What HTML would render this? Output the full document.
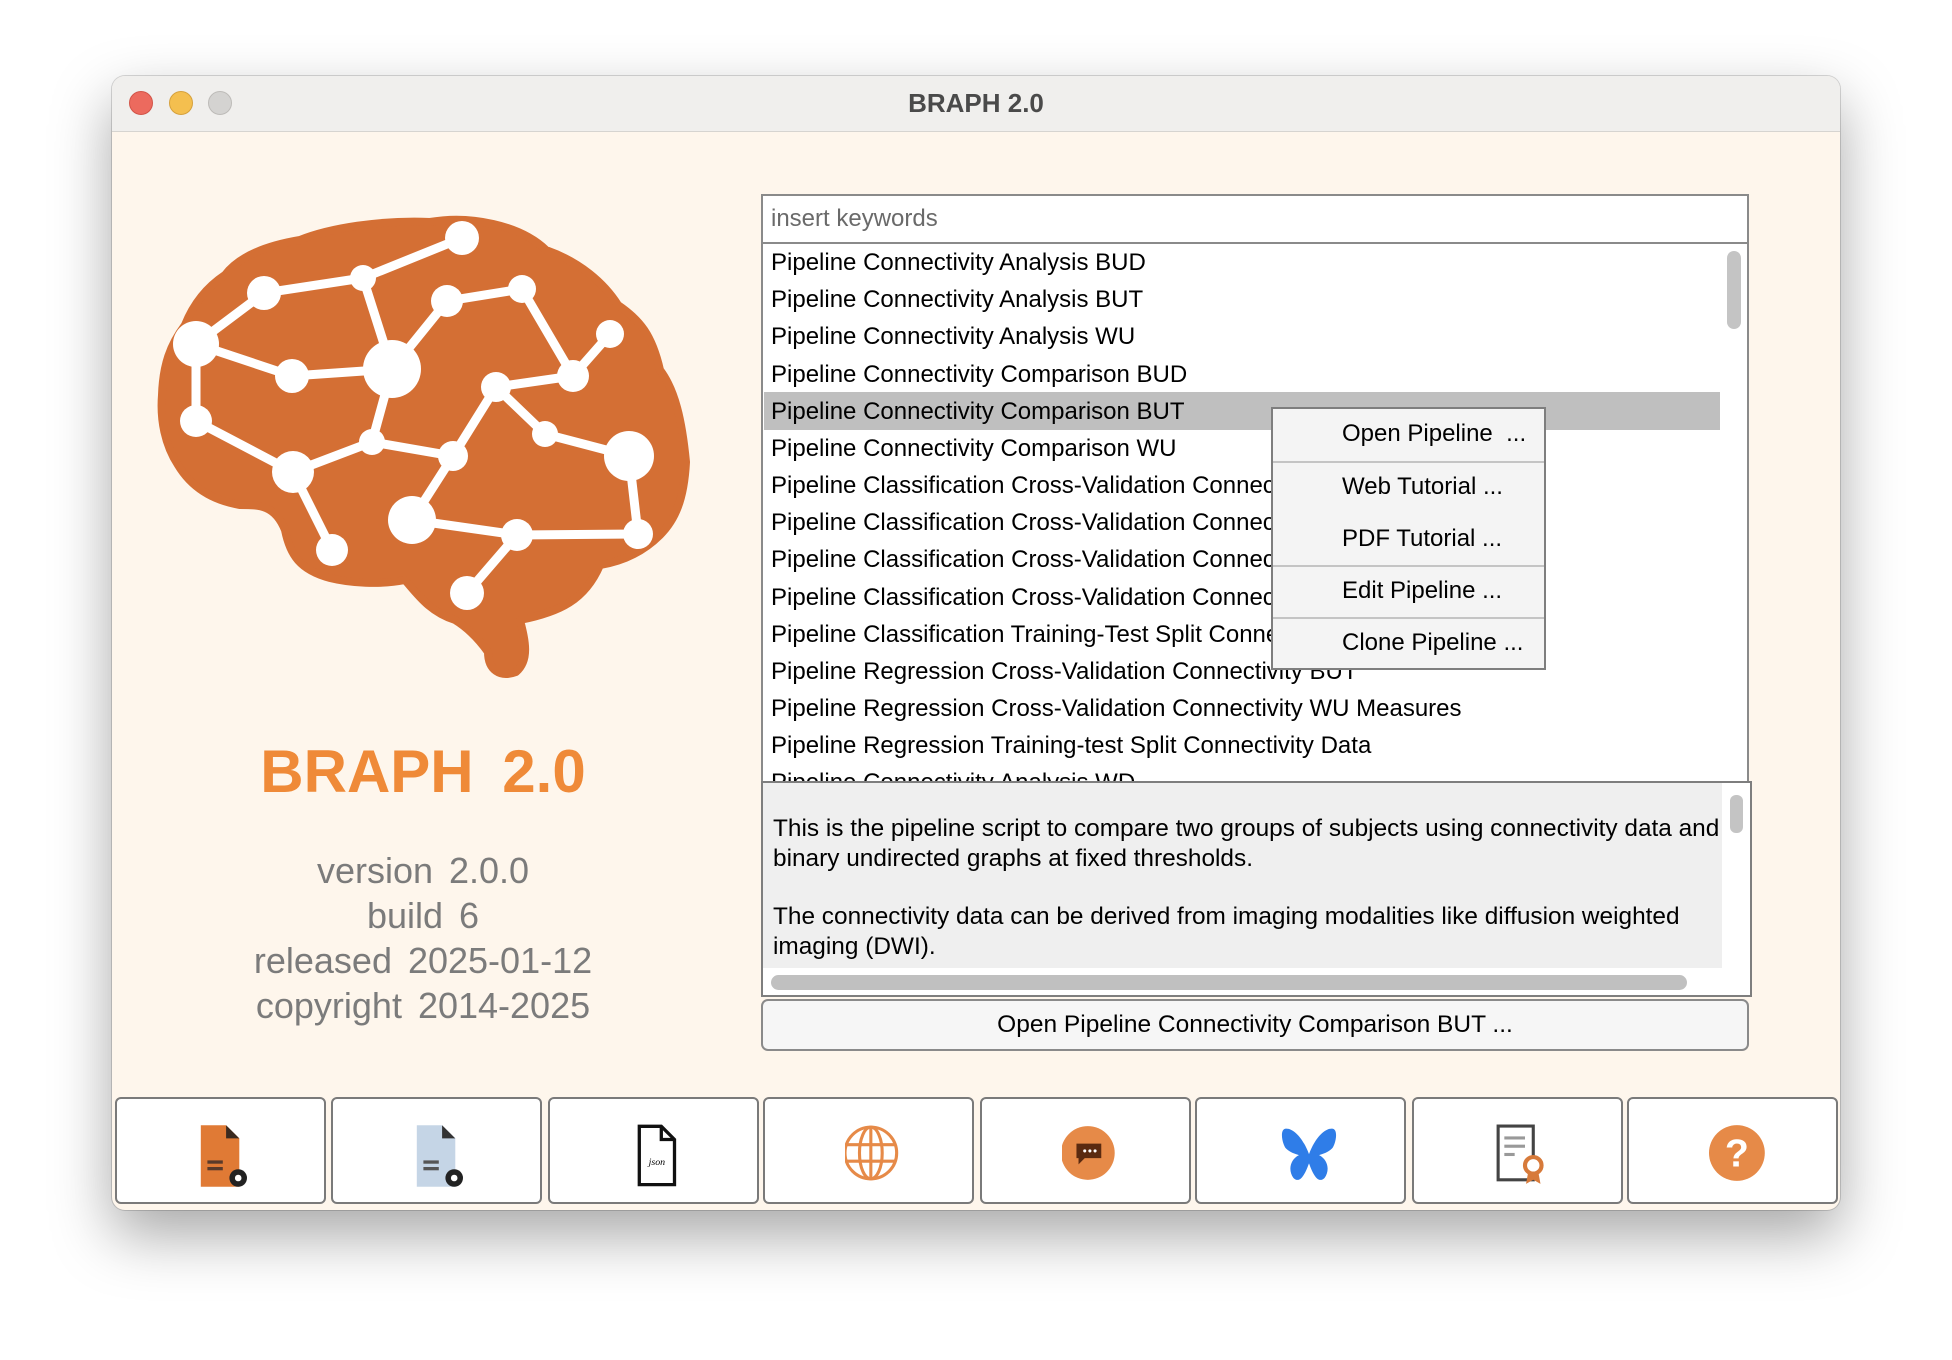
<!DOCTYPE html>
<html><head><meta charset="utf-8"><style>
*{margin:0;padding:0;box-sizing:border-box}
body{width:1952px;height:1360px;background:#fff;font-family:"Liberation Sans",Arial,sans-serif;position:relative;overflow:hidden}
.win{position:absolute;left:112px;top:76px;width:1728px;height:1134px;border-radius:13px;background:#fef6ec;box-shadow:0 25px 60px rgba(0,0,0,.35),0 0 0 1px rgba(0,0,0,.15);overflow:hidden}
.tb{position:absolute;left:0;top:0;width:100%;height:56px;background:#f0efed;border-bottom:1px solid #d6d4d0}
.tl{position:absolute;top:15px;width:24px;height:24px;border-radius:50%}
.title{position:absolute;left:0;right:0;top:12px;text-align:center;font-weight:bold;font-size:26px;color:#4a4a4a}
.abs{position:absolute}
.row{position:absolute;left:771px;font-size:24px;color:#000;white-space:nowrap;line-height:37px}
.mi{position:absolute;left:1342px;font-size:24px;color:#000;white-space:nowrap}
.bb{position:absolute;top:1097px;width:211px;height:107px;background:#fff;border:2px solid #7a7a7a;border-radius:6px}
.bb svg{position:absolute;left:80px;top:24px}
</style></head><body>
<div class="win">
 <div class="tb">
  <div class="tl" style="left:17px;background:#ec6a5e;border:1px solid #d25448"></div>
  <div class="tl" style="left:57px;background:#f4bf4f;border:1px solid #d6a13c"></div>
  <div class="tl" style="left:96px;background:#d4d3d1;border:1px solid #bdbbb8"></div>
  <div class="title">BRAPH 2.0</div>
 </div>
</div>

<svg class="abs" style="left:0;top:0" width="760" height="720" viewBox="0 0 760 720">
 <path d="M430 222 C470 215 520 225 546 250 C580 262 604 283 618 305 C640 320 652 335 660 370 C675 390 682 420 686 462 C684 500 675 520 660 535 C640 555 618 562 600 565 C585 600 560 612 520 620 C525 640 530 660 516 672 C500 678 488 670 488 652 C478 638 468 628 455 620 C430 612 418 595 405 580 C380 585 350 583 330 578 C300 570 290 555 285 530 C275 505 260 505 240 505 C210 500 190 485 178 465 C165 445 160 420 162 395 C163 365 170 345 185 325 C195 300 210 285 225 275 C240 255 270 245 300 240 C330 228 380 220 430 222 Z" fill="#d46f34" stroke="#d46f34" stroke-width="8" stroke-linejoin="round"/>
 <g stroke="#fff" stroke-width="9" stroke-linecap="round" fill="none">
  <path d="M462 238 L363 278 L264 293 L196 344 L196 421 L293 472 L332 550"/>
  <path d="M196 344 L292 376 L392 369 L447 301 L522 289 L573 376 L610 334"/>
  <path d="M363 278 L392 369 L372 442 L293 472"/>
  <path d="M372 442 L453 456 L496 387 L573 376"/>
  <path d="M496 387 L545 434 L629 456 L638 534 L517 535 L412 520 L453 456"/>
  <path d="M517 535 L467 593"/>
 </g>
 <g fill="#fff">
  <circle cx="462" cy="238" r="17"/><circle cx="363" cy="278" r="13"/><circle cx="264" cy="293" r="17"/>
  <circle cx="196" cy="344" r="23"/><circle cx="292" cy="376" r="17"/><circle cx="392" cy="369" r="29"/>
  <circle cx="447" cy="301" r="16"/><circle cx="522" cy="289" r="14"/><circle cx="610" cy="334" r="14"/>
  <circle cx="573" cy="376" r="16"/><circle cx="496" cy="387" r="15"/><circle cx="545" cy="434" r="13"/>
  <circle cx="629" cy="456" r="25"/><circle cx="638" cy="534" r="15"/><circle cx="517" cy="535" r="16"/>
  <circle cx="412" cy="520" r="24"/><circle cx="467" cy="593" r="17"/><circle cx="453" cy="456" r="15"/>
  <circle cx="372" cy="442" r="13"/><circle cx="293" cy="472" r="21"/><circle cx="196" cy="421" r="16"/>
  <circle cx="332" cy="550" r="16"/>
 </g>
</svg>

<div class="abs" style="left:223px;width:400px;top:737px;text-align:center;font-weight:bold;font-size:60px;color:#ef8a38;word-spacing:12px">BRAPH 2.0</div>
<div class="abs" style="left:223px;width:400px;top:848px;text-align:center;font-size:36px;color:#7b7b7b;line-height:45px;word-spacing:6px">version 2.0.0<br>build 6<br>released 2025-01-12<br>copyright 2014-2025</div>

<div class="abs" style="left:761px;top:194px;width:988px;height:50px;background:#fff;border:2px solid #8a8a8a"></div>
<div class="abs" style="left:771px;top:205px;font-size:24px;color:#6a6a6a">insert keywords</div>

<div class="abs" style="left:761px;top:242px;width:988px;height:541px;background:#fff;border:2px solid #8a8a8a;overflow:hidden">
 <div class="abs" style="left:1px;top:148px;width:956px;height:38px;background:#bfbfbf"></div>
 <div class="abs" style="left:964px;top:7px;width:14px;height:78px;border-radius:7px;background:#c4c4c4"></div>
</div>
<div class="row" style="top:244px">Pipeline Connectivity Analysis BUD</div>
<div class="row" style="top:281px">Pipeline Connectivity Analysis BUT</div>
<div class="row" style="top:318px">Pipeline Connectivity Analysis WU</div>
<div class="row" style="top:356px">Pipeline Connectivity Comparison BUD</div>
<div class="row" style="top:393px">Pipeline Connectivity Comparison BUT</div>
<div class="row" style="top:430px">Pipeline Connectivity Comparison WU</div>
<div class="row" style="top:467px">Pipeline Classification Cross-Validation Connectivity</div>
<div class="row" style="top:504px">Pipeline Classification Cross-Validation Connectivity</div>
<div class="row" style="top:541px">Pipeline Classification Cross-Validation Connectivity</div>
<div class="row" style="top:579px">Pipeline Classification Cross-Validation Connectivity</div>
<div class="row" style="top:616px">Pipeline Classification Training-Test Split Connectivity</div>
<div class="row" style="top:653px">Pipeline Regression Cross-Validation Connectivity BUT</div>
<div class="row" style="top:690px">Pipeline Regression Cross-Validation Connectivity WU Measures</div>
<div class="row" style="top:727px">Pipeline Regression Training-test Split Connectivity Data</div>
<div class="abs" style="left:761px;top:764px;width:988px;height:17px;overflow:hidden"><div class="row" style="left:10px;top:0">Pipeline Connectivity Analysis WD</div></div>

<div class="abs" style="left:1271px;top:407px;width:275px;height:263px;background:#f4f4f4;border:2px solid #7e7e7e">
 <div class="abs" style="left:0;right:0;top:52px;height:2px;background:#c4c4c4"></div>
 <div class="abs" style="left:0;right:0;top:156px;height:2px;background:#c4c4c4"></div>
 <div class="abs" style="left:0;right:0;top:208px;height:2px;background:#c4c4c4"></div>
</div>
<div class="mi" style="top:420px">Open Pipeline &nbsp;...</div>
<div class="mi" style="top:473px">Web Tutorial ...</div>
<div class="mi" style="top:525px">PDF Tutorial ...</div>
<div class="mi" style="top:577px">Edit Pipeline ...</div>
<div class="mi" style="top:629px">Clone Pipeline ...</div>

<div class="abs" style="left:761px;top:781px;width:991px;height:216px;background:#fff;border:2px solid #7e7e7e">
 <div class="abs" style="left:0;top:0;width:959px;height:185px;background:#efefef"></div>
 <div class="abs" style="left:967px;top:12px;width:13px;height:38px;border-radius:6px;background:#c4c4c4"></div>
 <div class="abs" style="left:8px;top:192px;width:916px;height:15px;border-radius:8px;background:#c0c0c0"></div>
 <div class="abs" style="left:10px;top:31px;font-size:24.4px;line-height:30px;color:#000;white-space:nowrap">This is the pipeline script to compare two groups of subjects using connectivity data and<br>binary undirected graphs at fixed thresholds.<br><div style="height:28px"></div>The connectivity data can be derived from imaging modalities like diffusion weighted<br>imaging (DWI).</div>
</div>

<div class="abs" style="left:761px;top:999px;width:988px;height:52px;background:#f6f6f6;border:2px solid #8a8a8a;border-radius:7px;text-align:center;font-size:24.5px;line-height:48px">Open Pipeline Connectivity Comparison BUT ...</div>

<div class="bb" style="left:115px"><svg width="56" height="66" viewBox="0 0 50 60"><path d="M3 2 H26 L38 14 V58 H3 Z" fill="#e07a35"/><path d="M26 2 V14 H38" fill="#3a2a20"/><rect x="9" y="34" width="14" height="3" fill="#5a3a2a"/><rect x="9" y="40" width="14" height="3" fill="#5a3a2a"/><circle cx="37" cy="50" r="8" fill="#222"/><circle cx="37" cy="50" r="3" fill="#fff"/></svg></div>
<div class="bb" style="left:331px"><svg width="56" height="66" viewBox="0 0 50 60"><path d="M3 2 H26 L38 14 V58 H3 Z" fill="#c5d5e6"/><path d="M26 2 V14 H38" fill="#333"/><rect x="9" y="34" width="14" height="3" fill="#555"/><rect x="9" y="40" width="14" height="3" fill="#555"/><circle cx="37" cy="50" r="8" fill="#222"/><circle cx="37" cy="50" r="3" fill="#fff"/></svg></div>
<div class="bb" style="left:548px"><svg width="56" height="66" viewBox="0 0 50 60"><path d="M8 3 H28 L40 15 V56 H8 Z" fill="#fff" stroke="#111" stroke-width="3"/><path d="M28 3 V15 H40" fill="none" stroke="#111" stroke-width="3"/><text x="24" y="38" font-size="9" text-anchor="middle" font-style="italic" font-family="Liberation Serif,serif">json</text></svg></div>
<div class="bb" style="left:763px"><svg width="62" height="62" viewBox="0 0 60 60"><g fill="none" stroke="#e68a48" stroke-width="3"><circle cx="25" cy="29" r="25"/><ellipse cx="25" cy="29" rx="11" ry="25"/><path d="M25 4 V54 M2 21 H48 M2 37 H48"/></g></svg></div>
<div class="bb" style="left:980px"><svg width="62" height="62" viewBox="0 0 60 60"><circle cx="25" cy="29" r="26" fill="#e68a48"/><path d="M14 20 H38 V34 H22 L16 40 V34 H14 Z" fill="#5a2a10"/><circle cx="22" cy="27" r="1.5" fill="#fff"/><circle cx="27" cy="27" r="1.5" fill="#fff"/><circle cx="32" cy="27" r="1.5" fill="#fff"/></svg></div>
<div class="bb" style="left:1195px"><svg width="64" height="66" viewBox="0 0 70 64"><path d="M35 30 C30 16 20 2 10 2 C2 2 6 20 10 24 C14 28 20 30 24 31 C14 36 12 48 18 56 C26 64 32 48 35 40 C38 48 44 64 52 56 C58 48 56 36 46 31 C50 30 56 28 60 24 C64 20 68 2 60 2 C50 2 40 16 35 30 Z" fill="#2f7de8"/></svg></div>
<div class="bb" style="left:1412px"><svg width="62" height="64" viewBox="0 0 60 60"><rect x="4" y="2" width="34" height="52" fill="#fff" stroke="#444" stroke-width="3"/><rect x="10" y="12" width="20" height="3" fill="#999"/><rect x="10" y="20" width="20" height="3" fill="#999"/><rect x="10" y="28" width="10" height="3" fill="#999"/><circle cx="38" cy="40" r="8" fill="#fff" stroke="#d77a3a" stroke-width="4"/><path d="M33 47 L31 58 L38 54 L45 58 L43 47" fill="#d77a3a"/></svg></div>
<div class="bb" style="left:1627px"><svg width="62" height="62" viewBox="0 0 60 60"><circle cx="27" cy="29" r="27" fill="#e68a48"/><text x="27" y="42" font-size="38" font-weight="bold" fill="#fff" text-anchor="middle" font-family="Liberation Sans,sans-serif">?</text></svg></div>
</body></html>
